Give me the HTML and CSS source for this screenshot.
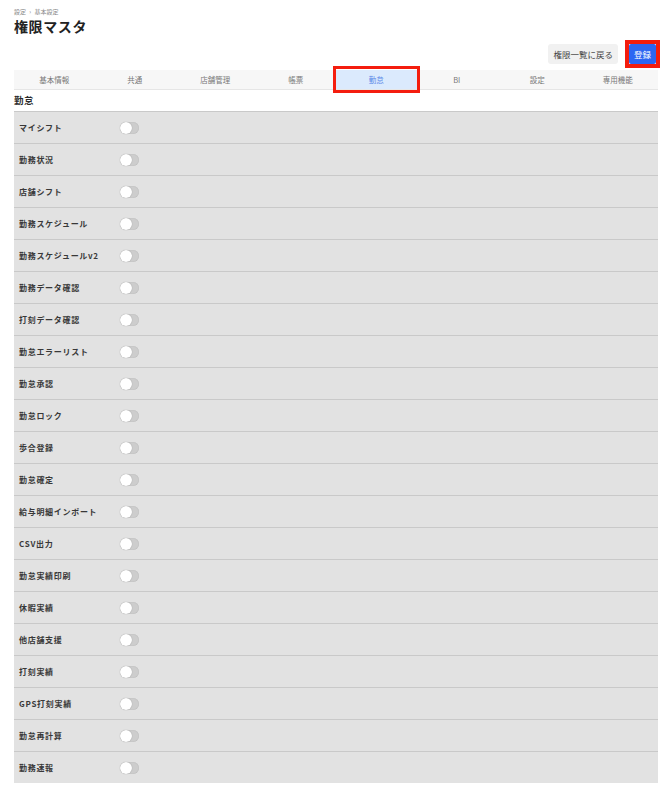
FILE: index.html
```html
<!DOCTYPE html>
<html lang="ja">
<head>
    <meta charset="UTF-8">
    <title>権限マスタ</title>
    <meta name="viewport" content="width=device-width, initial-scale=1">
    <link rel="stylesheet" href="styles.css">
</head>
<body>

<div class="page">
    <div class="breadcrumb">設定 <span class="sep">›</span> 基本設定</div>
    <h1 class="title">権限マスタ</h1>

    <div class="actions flex justify-end align-center">
        <button class="button">権限一覧に戻る</button>
        <div class="mark">
            <button class="button primary">登録</button>
        </div>
    </div>

    <div class="tabs">
        <div class="tab">基本情報</div>
        <div class="tab">共通</div>
        <div class="tab">店舗管理</div>
        <div class="tab">帳票</div>
        <div class="tab active">勤怠</div>
        <div class="tab">BI</div>
        <div class="tab">設定</div>
        <div class="tab">専用機能</div>
    </div>

    <div class="section-title">勤怠</div>

    <div class="list">
        <div class="row"><div class="label">マイシフト</div><span class="toggle"></span></div>
        <div class="row"><div class="label">勤務状況</div><span class="toggle"></span></div>
        <div class="row"><div class="label">店舗シフト</div><span class="toggle"></span></div>
        <div class="row"><div class="label">勤務スケジュール</div><span class="toggle"></span></div>
        <div class="row"><div class="label">勤務スケジュールv2</div><span class="toggle"></span></div>
        <div class="row"><div class="label">勤務データ確認</div><span class="toggle"></span></div>
        <div class="row"><div class="label">打刻データ確認</div><span class="toggle"></span></div>
        <div class="row"><div class="label">勤怠エラーリスト</div><span class="toggle"></span></div>
        <div class="row"><div class="label">勤怠承認</div><span class="toggle"></span></div>
        <div class="row"><div class="label">勤怠ロック</div><span class="toggle"></span></div>
        <div class="row"><div class="label">歩合登録</div><span class="toggle"></span></div>
        <div class="row"><div class="label">勤怠確定</div><span class="toggle"></span></div>
        <div class="row"><div class="label">給与明細インポート</div><span class="toggle"></span></div>
        <div class="row"><div class="label">CSV出力</div><span class="toggle"></span></div>
        <div class="row"><div class="label">勤怠実績印刷</div><span class="toggle"></span></div>
        <div class="row"><div class="label">休暇実績</div><span class="toggle"></span></div>
        <div class="row"><div class="label">他店舗支援</div><span class="toggle"></span></div>
        <div class="row"><div class="label">打刻実績</div><span class="toggle"></span></div>
        <div class="row"><div class="label">GPS打刻実績</div><span class="toggle"></span></div>
        <div class="row"><div class="label">勤怠再計算</div><span class="toggle"></span></div>
        <div class="row"><div class="label">勤務速報</div><span class="toggle"></span></div>
    </div>
</div>

</body>
</html>
```

FILE: styles.css
```css
html {
    background-color: #fff;
}

body {
    margin: 0;
    font-family: "Noto Sans CJK JP", "Noto Sans", sans-serif;
    color: #333;
}

.flex {
    display: flex;
}

.justify-end {
    justify-content: flex-end;
}

.align-center {
    align-items: center;
}

.page {
    padding: 8px 12px 0 14px;
}

.breadcrumb {
    font-size: 6px;
    line-height: 8px;
    color: #888;
}

.breadcrumb .sep {
    margin: 0 2px;
}

.title {
    margin: 0;
    font-size: 14px;
    line-height: 20px;
    font-weight: bold;
    color: #222;
    letter-spacing: 0.6px;
}

.actions {
    gap: 7px;
    height: 28px;
    margin-top: 4px;
}

.button {
    height: 20px;
    padding: 0 5px;
    font-family: inherit;
    font-size: 8.5px;
    border: none;
    border-radius: 3px;
    color: #444;
    background: #f1f1f1;
    cursor: pointer;
}

.button.primary {
    padding: 0 5px;
    color: #fff;
    background: #2d66f2;
    border-radius: 2px;
}

.mark {
    border: 4px solid #f41d0e;
    line-height: 0;
    margin-right: -2px;
}

.tabs {
    display: grid;
    grid-template-columns: repeat(8, 1fr);
    margin-top: 2px;
    height: 19px;
    background: #f7f7f7;
    border-bottom: 1px solid #e6e6e6;
}

.tab {
    font-size: 7.5px;
    line-height: 19px;
    text-align: center;
    color: #777;
}

.tab.active {
    position: relative;
    background: #dbeafd;
    color: #5b8ae8;
}

.tab.active::after {
    content: "";
    position: absolute;
    left: -3px;
    right: -3px;
    top: -4px;
    bottom: -4px;
    border: 3px solid #f41d0e;
}

.section-title {
    margin-top: 2px;
    font-size: 9.5px;
    line-height: 16px;
    font-weight: bold;
    letter-spacing: 0.5px;
    color: #2a2a2a;
    padding-bottom: 3px;
}

.list {
    background: #e2e2e2;
}

.row {
    display: flex;
    align-items: center;
    height: 31px;
    border-top: 1px solid #c9c9c9;
}

.label {
    box-sizing: border-box;
    width: 106px;
    padding-left: 5px;
    font-size: 8px;
    line-height: 1;
    font-weight: bold;
    letter-spacing: 0.7px;
    color: #383838;
}

.toggle {
    position: relative;
    width: 19px;
    height: 12px;
    border-radius: 6px;
    background: #cdcdcd;
    box-shadow: inset 0 0 1px rgba(0, 0, 0, 0.2);
}

.toggle::before {
    content: "";
    position: absolute;
    left: 0;
    top: 0;
    width: 12px;
    height: 12px;
    border-radius: 50%;
    background: #fff;
    box-shadow: 0 0 1px rgba(0, 0, 0, 0.35);
}
```
